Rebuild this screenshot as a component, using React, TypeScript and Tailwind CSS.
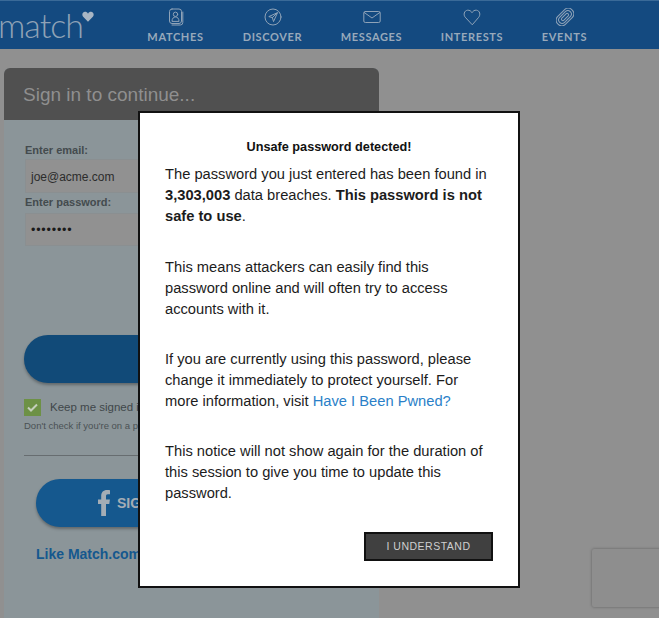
const navItems = [
  { label: 'MATCHES', width: 'w-[97px]', icon: 'matches' },
  { label: 'DISCOVER', width: 'w-[97px]', icon: 'discover' },
  { label: 'MESSAGES', width: 'w-[101px]', icon: 'messages' },
  { label: 'INTERESTS', width: 'w-[100px]', icon: 'interests' },
  { label: 'EVENTS', width: 'w-[85px]', icon: 'events' },
]

function NavIcon({ name }: { name: string }) {
  const common = {
    fill: 'none',
    stroke: '#8fa3b8',
    strokeWidth: 1,
    strokeLinecap: 'round' as const,
    strokeLinejoin: 'round' as const,
  }
  if (name === 'matches') {
    return (
      <svg width="18" height="18" viewBox="0 0 18 18" {...common}>
        <rect x="2.500" y="1" width="12" height="14.500" rx="2.500" />
        <path d="M15.800 4v10.500a2.500 2.500 0 0 1-2.500 2.500H5" />
        <circle cx="8.500" cy="6.300" r="2.200" />
        <path d="M5 13c0-2.600 1.600-4 3.500-4s3.500 1.400 3.500 4z" />
      </svg>
    )
  }
  if (name === 'discover') {
    return (
      <svg width="18" height="18" viewBox="0 0 18 18" {...common}>
        <circle cx="9" cy="9" r="8" />
        <path d="M13.200 4.800 4.800 8.600l3.600 1 1 3.600zM8.400 9.600l4.800-4.800" />
      </svg>
    )
  }
  if (name === 'messages') {
    return (
      <svg width="18" height="18" viewBox="0 0 18 18" {...common}>
        <rect x="0.800" y="3.500" width="16.400" height="11" rx="1.500" />
        <path d="M1.200 4.500 9 10l7.800-5.500" />
      </svg>
    )
  }
  if (name === 'interests') {
    return (
      <svg width="18" height="18" viewBox="0 0 18 18" {...common}>
        <path d="M9 16.500 2.200 9.200C.2 6.900 1 2.600 4.600 2.200 6.600 2 8 3 9 4.700c1-1.700 2.400-2.700 4.400-2.500 3.600.4 4.400 4.700 2.400 7z" />
      </svg>
    )
  }
  return (
    <svg width="18" height="18" viewBox="0 0 18 18" {...common}>
      <g transform="rotate(45 9 9)">
        <rect x="3.500" y="-1" width="11" height="20" rx="5" />
        <rect x="5.500" y="1.500" width="7" height="15" rx="3.500" />
        <rect x="7.500" y="4.500" width="3" height="9" rx="1.500" />
      </g>
    </svg>
  )
}

function Header() {
  return (
    <header className="flex h-[49px] items-stretch border-t border-[#3a6a98] bg-[#144a80]">
      <div className="relative w-[127px] shrink-0">
        <span className="absolute left-[-2px] top-[4px] font-['Lato',sans-serif] text-[34px] font-light leading-[40px] tracking-[-1px] text-[#8fa2b6]">
          match
        </span>
        <svg className="absolute left-[82px] top-[10px]" width="12" height="11" viewBox="0 0 18 16" fill="#a9b6c4">
          <path d="M9 16 1.700 8.500C-.8 5.700.8 1 4.500 1 6.500 1 8 2 9 3.800 10 2 11.500 1 13.500 1c3.700 0 5.300 4.700 2.800 7.500z" />
        </svg>
      </div>
      <nav className="flex">
        {navItems.map((item) => (
          <div key={item.label} className={`flex flex-col items-center pt-[7px] ${item.width}`}>
            <NavIcon name={item.icon} />
            <span className="mt-[4px] font-['Lato',sans-serif] text-[11px] font-bold leading-[14px] tracking-[0.65px] text-[#98a9bb]">
              {item.label}
            </span>
          </div>
        ))}
      </nav>
    </header>
  )
}

function SignInPanel() {
  return (
    <section className="ml-1 mt-[19px] w-[375px] overflow-hidden rounded-t-[6px] bg-[#8b9599]">
      <div className="flex h-[52px] items-center bg-[#505050] px-[19px] pt-[2px]">
        <h1 className="font-['Liberation_Sans',sans-serif] text-[19px] text-[#8f8f8f]">Sign in to continue...</h1>
      </div>
      <form className="flex h-[498px] flex-col px-[21px] pt-[23px] font-['Liberation_Sans',sans-serif]">
        <label className="text-[11px] font-bold leading-[14px] text-[#444b4e]">Enter email:</label>
        <div className="mt-[2px] flex h-[34px] items-center border border-[#8a8f91] bg-[#919191] px-[5px] pt-[2px] text-[12px] text-[#2c2c2c]">
          joe@acme.com
        </div>
        <label className="mt-[2px] text-[11px] font-bold leading-[14px] text-[#444b4e]">Enter password:</label>
        <div className="mt-[4px] flex h-[33px] items-center border border-[#8a8f91] bg-[#919191] px-[5px] pt-[2px] text-[12.500px] tracking-[0.8px] text-[#1a1a1a]">
          ••••••••
        </div>
        <button type="button" className="mt-[89px] -ml-px h-[48px] shrink-0 rounded-full bg-[#114a78] shadow-[0_2px_3px_rgba(0,0,0,0.3)]" />
        <div className="mt-[16px] flex items-center">
          <span className="-ml-px flex h-[17px] w-[17px] items-center justify-center bg-[#6d9146]">
            <svg width="11" height="9" viewBox="0 0 11 9" fill="none" stroke="#c5cfbd" strokeWidth="2">
              <path d="M1 4.500 4 7.500 10 1.500" />
            </svg>
          </span>
          <span className="ml-[9px] text-[11.500px] text-[#40474a]">Keep me signed in</span>
        </div>
        <p className="mt-[4px] -ml-px whitespace-nowrap text-[9.500px] leading-[12px] text-[#4a5154]">Don't check if you're on a public computer</p>
        <div className="mt-[23px] -ml-px h-px bg-[#676d70]" />
        <button type="button" className="ml-[11px] mr-3 mt-[23px] flex h-[48px] shrink-0 items-center rounded-full bg-[#15588e] pl-[62px] text-left shadow-[0_2px_3px_rgba(0,0,0,0.3)]">
          <svg width="12" height="26" viewBox="0 0 12 26" fill="#a4adb5">
            <path d="M3.200 26V14H0V9.500h3.200V6.200C3.200 2.200 5.400 0 9 0c1.300 0 2.300.1 3 .2v4.100H9.900C8.300 4.300 8 5.100 8 6.400v3.100h3.900l-.6 4.500H8v12z" />
          </svg>
          <span className="ml-[7px] text-[14px] font-bold text-[#a4adb5]">SIGN IN</span>
        </button>
        <a className="ml-[11px] mt-[17px] whitespace-nowrap text-[14px] font-bold text-[#15588e]">Like Match.com</a>
      </form>
    </section>
  )
}

function UnsafePasswordModal() {
  return (
    <div className="absolute left-[138px] top-[111px] flex h-[477px] w-[382px] flex-col border-2 border-[#111] bg-white px-[25px] pt-[26px] font-['Liberation_Sans',sans-serif] text-[14.700px] leading-[21px] text-[#1c1c1c]">
      <h2 className="text-center text-[12.700px] font-bold leading-[16px] text-[#111]">Unsafe password detected!</h2>
      <p className="mt-[9px]">
        The password you just entered has been found in <strong>3,303,003</strong> data breaches.{' '}
        <strong>This password is not safe to use</strong>.
      </p>
      <p className="mt-[30px]">This means attackers can easily find this password online and will often try to access accounts with it.</p>
      <p className="mt-[29px]">
        If you are currently using this password, please change it immediately to protect yourself. For more information, visit{' '}
        <a className="text-[#2a7fc8]">Have I Been Pwned?</a>
      </p>
      <p className="mt-[29px]">This notice will not show again for the duration of this session to give you time to update this password.</p>
      <button
        type="button"
        className="mt-[28px] h-[29px] w-[129px] self-end border-2 border-[#111] bg-[#404040] text-[10.500px] tracking-[0.5px] text-[#cfcfcf]"
      >
        I UNDERSTAND
      </button>
    </div>
  )
}

export default function App() {
  return (
    <div className="relative h-[618px] w-[659px] overflow-hidden bg-[#909090]">
      <Header />
      <SignInPanel />
      {/* recaptcha badge, bottom right */}
      <div className="absolute left-[592px] top-[549px] h-[58px] w-[80px] rounded-[2px] bg-[#8e8e8e] shadow-[0_0_3px_rgba(0,0,0,0.35)]" />
      <UnsafePasswordModal />
    </div>
  )
}
